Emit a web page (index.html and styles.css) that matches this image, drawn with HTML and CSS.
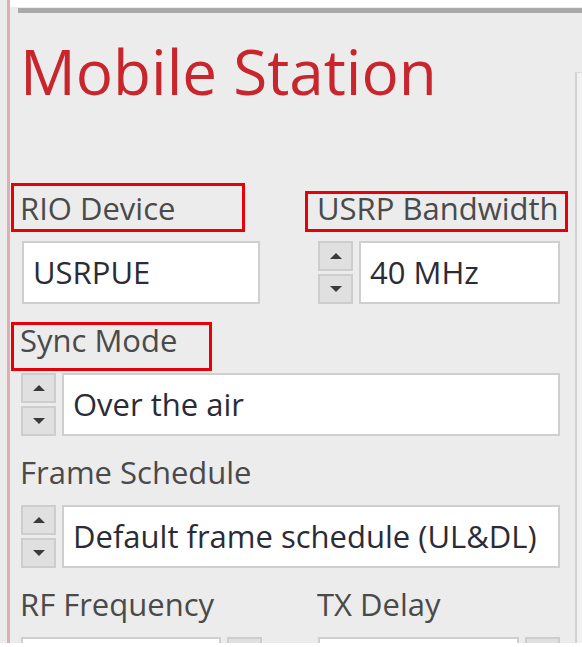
FILE: index.html
```html
<!DOCTYPE html>
<html lang="en">
<head>
  <meta charset="UTF-8">
  <meta name="viewport" content="width=device-width, initial-scale=1.0">
  <title>Mobile Station</title>
  <link rel="stylesheet" href="styles.css">
</head>
<body>
  <div class="screen">
    <div class="pane">
      <div class="topgap"></div>
      <div class="tabline"></div>
      <div class="main">
        <div class="form">
          <h1 class="title">Mobile Station</h1>
          <div class="grid">
            <div class="field">
              <label class="lbl mark mark-rio">RIO Device</label>
              <div class="box box-rio">USRPUE</div>
            </div>
            <div class="field">
              <label class="lbl mark mark-bw">USRP Bandwidth</label>
              <div class="spin">
                <div class="arrows">
                  <span class="arr up"></span>
                  <span class="arr down"></span>
                </div>
                <div class="box">40 MHz</div>
              </div>
            </div>

            <div class="field wide">
              <label class="lbl mark mark-sync">Sync Mode</label>
              <div class="spin">
                <div class="arrows">
                  <span class="arr up"></span>
                  <span class="arr down"></span>
                </div>
                <div class="box">Over the air</div>
              </div>
            </div>

            <div class="field wide">
              <label class="lbl">Frame Schedule</label>
              <div class="spin">
                <div class="arrows">
                  <span class="arr up"></span>
                  <span class="arr down"></span>
                </div>
                <div class="box">Default frame schedule (UL&amp;DL)</div>
              </div>
            </div>

            <div class="field">
              <label class="lbl">RF Frequency</label>
              <div class="num">
                <div class="box"></div>
                <span class="btn"></span>
              </div>
            </div>
            <div class="field">
              <label class="lbl">TX Delay</label>
              <div class="num">
                <div class="box"></div>
                <span class="btn"></span>
              </div>
            </div>
          </div>
        </div>
        <div class="side"></div>
      </div>
    </div>
  </div>
</body>
</html>
```

FILE: styles.css
```css
body {
  margin: 0;
  background: #fff;
  font-family: "Open Sans", "Noto Sans", sans-serif;
}
.screen {
  height: 643px;
  padding-left: 7px;
  background: #ececec;
  display: flex;
  box-sizing: border-box;
  overflow: hidden;
}
.pane {
  flex: 1;
  min-width: 0;
  border-left: 3px solid #e0aeae;
  display: flex;
  flex-direction: column;
  overflow: hidden;
}
.topgap {
  flex-shrink: 0;
  height: 7px;
  background: #fff;
}
.tabline {
  flex-shrink: 0;
  height: 5px;
  margin: 1px 0 0 8px;
  background: #a9a9a9;
}
.main {
  flex: 1;
  min-height: 0;
  display: flex;
}
.form {
  width: 555px;
  padding-left: 10px;
}
.side {
  flex: 1;
  margin-top: 59px;
  border-left: 2px solid #d2d2d2;
  border-top: 1px solid #dadada;
  background: #f1f1f1;
}
.title {
  margin: 27px 0 0;
  font-size: 62px;
  line-height: 62px;
  font-weight: 400;
  color: #c8262c;
}
.grid {
  display: grid;
  grid-template-columns: 242px 243px;
  column-gap: 55px;
  row-gap: 16px;
  margin-top: 86px;
}
.wide {
  grid-column: 1 / -1;
}
.lbl {
  display: block;
  position: relative;
  font-size: 31px;
  line-height: 40px;
  color: #4a4a4a;
  white-space: nowrap;
}
.mark::after {
  content: "";
  position: absolute;
  border: 3px solid #e5000a;
}
.mark-rio::after {
  top: -5px;
  left: -9px;
  width: 228px;
  height: 43px;
}
.mark-bw::after {
  top: 3px;
  left: -12px;
  width: 257px;
  height: 35px;
}
.mark-sync::after {
  top: 2px;
  left: -9px;
  width: 195px;
  height: 43px;
}
.box {
  box-sizing: border-box;
  height: 63px;
  background: #fff;
  border: 2px solid #cfcfcf;
  padding-left: 9px;
  font-size: 31px;
  line-height: 59px;
  color: #2b2b35;
  white-space: nowrap;
  overflow: hidden;
}
.box-rio {
  margin: 13px 0 0 2px;
  width: 238px;
}
.spin {
  display: flex;
  gap: 6px;
  margin-top: 13px;
  height: 63px;
}
.spin .box {
  flex: 1;
}
.arrows {
  width: 35px;
  margin-left: 1px;
  display: flex;
  flex-direction: column;
  gap: 3px;
}
.arr {
  flex: 1;
  box-sizing: border-box;
  background: #e0e0e0;
  border: 2px solid #cdcdcd;
  display: flex;
  align-items: center;
  justify-content: center;
}
.arr::before {
  content: "";
  border-left: 6px solid transparent;
  border-right: 6px solid transparent;
}
.up::before {
  border-bottom: 6px solid #3a3a3a;
}
.down::before {
  border-top: 6px solid #3a3a3a;
}
.num {
  display: flex;
  gap: 6px;
  margin-top: 13px;
  height: 63px;
}
.num .box {
  flex: 1;
  margin-left: 1px;
}
.btn {
  width: 35px;
  box-sizing: border-box;
  background: #e0e0e0;
  border: 2px solid #cdcdcd;
}
```
